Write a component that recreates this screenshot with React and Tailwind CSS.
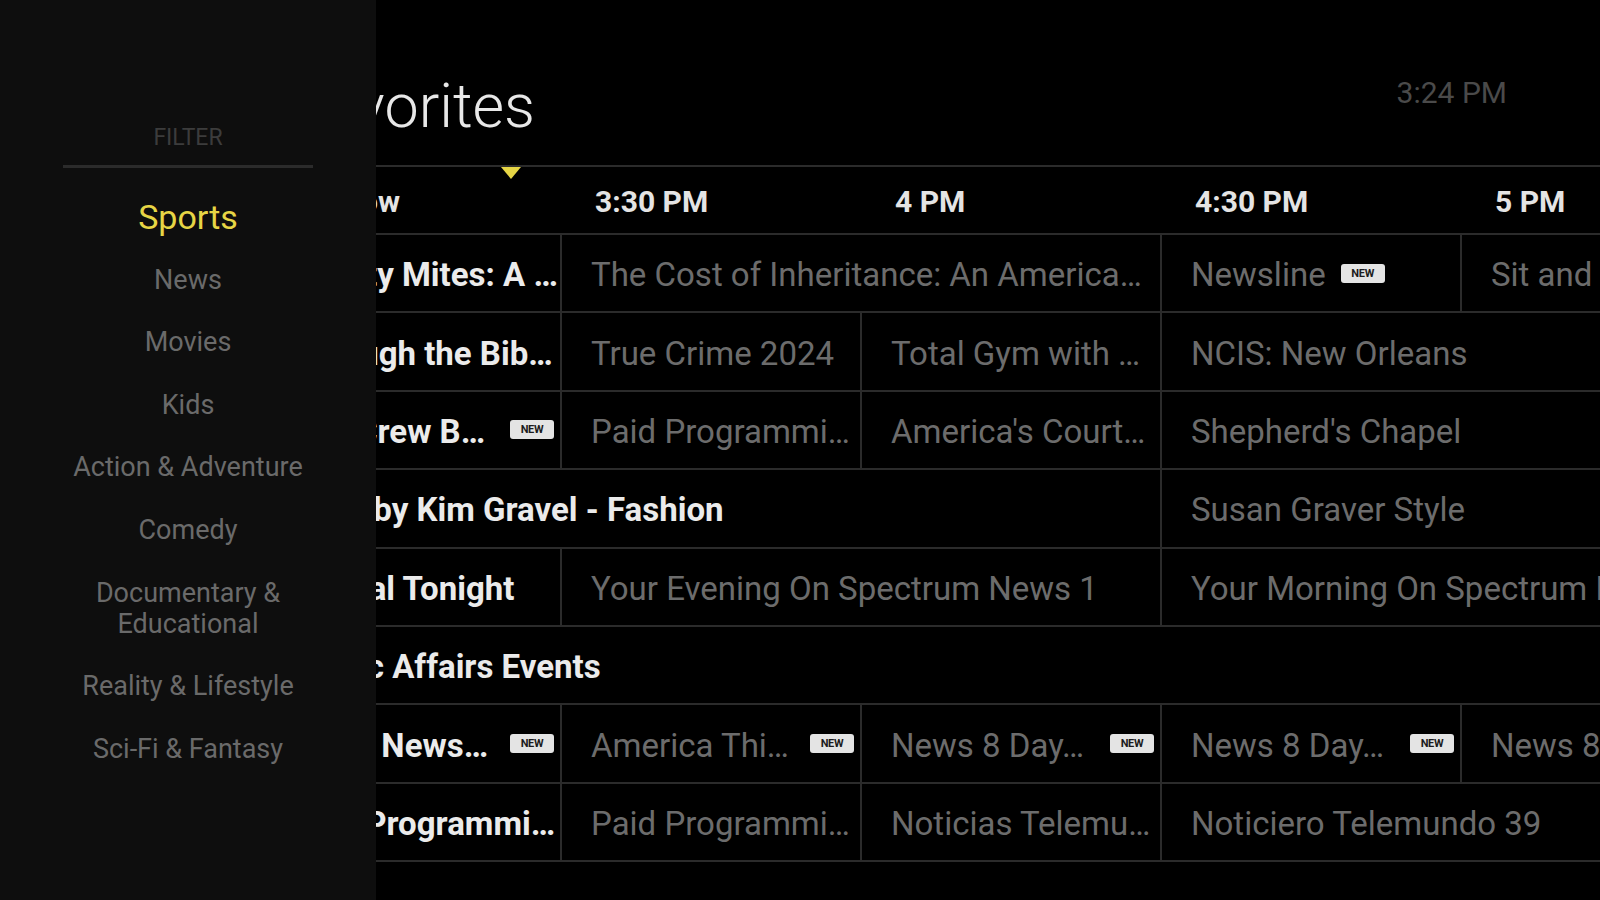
import React from "react";

const BORDER = "border-[#2b2b2b]";

const rows = [
  [
    { t: "Mighty Mites: A …", w: "w-[300px]", cur: true },
    { t: "The Cost of Inheritance: An America…", w: "w-[600px]" },
    { t: "Newsline", w: "w-[300px]", badge: "after" },
    { t: "Sit and Be Fit", w: "flex-1" },
  ],
  [
    { t: "Through the Bib…", w: "w-[300px]", cur: true },
    { t: "True Crime 2024", w: "w-[300px]" },
    { t: "Total Gym with …", w: "w-[300px]" },
    { t: "NCIS: New Orleans", w: "flex-1" },
  ],
  [
    { t: "The Crew B…", w: "w-[300px]", cur: true, badge: "end" },
    { t: "Paid Programmi…", w: "w-[300px]" },
    { t: "America's Court…", w: "w-[300px]" },
    { t: "Shepherd's Chapel", w: "flex-1" },
  ],
  [
    { t: "Belle by Kim Gravel - Fashion", w: "w-[900px]", cur: true },
    { t: "Susan Graver Style", w: "flex-1" },
  ],
  [
    { t: "Capital Tonight", w: "w-[300px]", cur: true },
    { t: "Your Evening On Spectrum News 1", w: "w-[600px]" },
    { t: "Your Morning On Spectrum News 1", w: "flex-1" },
  ],
  [{ t: "Public Affairs Events", w: "flex-1", cur: true }],
  [
    { t: "WISH News…", w: "w-[300px]", cur: true, badge: "end" },
    { t: "America Thi…", w: "w-[300px]", badge: "end" },
    { t: "News 8 Day…", w: "w-[300px]", badge: "end" },
    { t: "News 8 Day…", w: "w-[300px]", badge: "end" },
    { t: "News 8 Daybreak", w: "flex-1" },
  ],
  [
    { t: "Paid Programmi…", w: "w-[300px]", cur: true },
    { t: "Paid Programmi…", w: "w-[300px]" },
    { t: "Noticias Telemu…", w: "w-[300px]" },
    { t: "Noticiero Telemundo 39", w: "flex-1" },
  ],
];

const times = ["On Now", "3:30 PM", "4 PM", "4:30 PM", "5 PM"];

const filters = [
  "News",
  "Movies",
  "Kids",
  "Action & Adventure",
  "Comedy",
  "Documentary &\nEducational",
  "Reality & Lifestyle",
  "Sci-Fi & Fantasy",
];

function NewBadge({ end }) {
  return (
    <span
      className={`${end ? "ml-auto" : "ml-[15px]"} shrink-0 inline-flex items-center justify-center w-[44px] h-[19px] rounded-[3px] bg-[#e4e4e4] text-[#1c1c1c] text-[11px] font-bold leading-none tracking-[-0.3px]`}
    >
      NEW
    </span>
  );
}

function Cell({ c }) {
  return (
    <div
      className={`${c.w} shrink-0 min-w-0 flex items-center border-l-2 ${BORDER} pl-[29px] pr-[6px] overflow-hidden whitespace-nowrap`}
    >
      <span
        className={`text-[33px] leading-none pt-[3px] ${
          c.cur ? "font-bold text-[#ebebeb]" : "font-normal text-[#6c6c6c]"
        }`}
      >
        {c.t}
      </span>
      {c.badge && <NewBadge end={c.badge === "end"} />}
    </div>
  );
}

export default function App() {
  return (
    <div className="relative w-[1600px] h-[900px] bg-black overflow-hidden font-['Roboto','Liberation_Sans',sans-serif]">
      <main className="pl-[260px] flex flex-col">
        <div className="h-[165px] flex justify-between items-start pt-[76px] pl-[30px] pr-[93px]">
          <h1 className="text-[61px] leading-none font-light text-[#e8e8e8]">
            Favorites
          </h1>
          <div className="pt-[2px] text-[30px] leading-none text-[#4a4a4a]">3:24 PM</div>
        </div>

        <div className={`relative flex h-[70px] border-y-2 ${BORDER}`}>
          {times.map((t) => (
            <div
              key={t}
              className="w-[300px] shrink-0 pl-[35px] pt-[4px] flex items-center text-[30px] font-bold leading-none text-[#e4e4e4] whitespace-nowrap"
            >
              {t}
            </div>
          ))}
          <span className="absolute left-[241px] top-0 w-0 h-0 border-x-[10px] border-x-transparent border-t-[12px] border-t-[#e6d545]" />
        </div>

        {rows.map((r, i) => (
          <div key={i} className={`flex h-[78.4px] border-b-2 ${BORDER}`}>
            {r.map((c, j) => (
              <Cell key={j} c={c} />
            ))}
          </div>
        ))}
      </main>

      <aside className="absolute left-0 top-0 h-full w-[376px] bg-[#0e0e0e] flex flex-col items-center pt-[126px]">
        <div className="text-[23px] leading-[24px] text-[#3c3c3c]">FILTER</div>
        <div className="mt-[15px] w-[250px] h-[3px] bg-[#2b2b2b]" />
        <ul className="mt-[34px] flex flex-col items-center gap-[31.3px] text-center">
          <li className="text-[34px] leading-[31.3px] text-[#e6d545]">Sports</li>
          {filters.map((f) => (
            <li
              key={f}
              className="text-[27px] leading-[31.3px] text-[#6a6a6a] whitespace-pre-line"
            >
              {f}
            </li>
          ))}
        </ul>
      </aside>
    </div>
  );
}
